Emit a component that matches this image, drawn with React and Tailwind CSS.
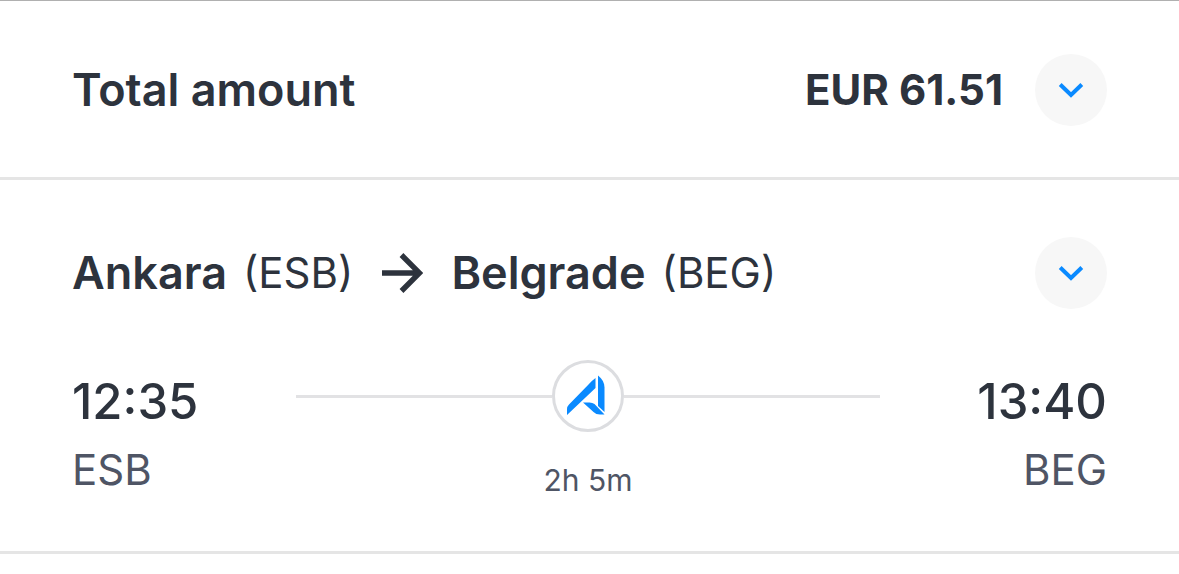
const trip = {
  total: "EUR 61.51",
  duration: "2h 5m",
  from: { city: "Ankara", code: "ESB", time: "12:35" },
  to: { city: "Belgrade", code: "BEG", time: "13:40" },
};

const ToggleButton = ({ label }) => (
  <button
    type="button"
    aria-label={label}
    className="grid size-[72px] shrink-0 cursor-pointer place-items-center rounded-full bg-[#f7f7f7]"
  >
    <svg width="26" height="16" viewBox="0 0 26 16" fill="none">
      <path d="M2.200 2.500 13 13 23.800 2.500" stroke="#0a8aff" strokeWidth="4" />
    </svg>
  </button>
);

const ArrowIcon = () => (
  <svg width="42" height="42" viewBox="0 0 42 42" fill="none" className="shrink-0">
    <path d="M1 21H38M20.500 3 38.500 21 20.500 39" stroke="#2d333d" strokeWidth="5.4" />
  </svg>
);

const CarrierLogo = () => (
  <div className="grid size-[72px] shrink-0 place-items-center rounded-full border-3 border-[#dcdde0] bg-white">
    <svg width="42" height="42" viewBox="0 0 42 42" fill="#0a8aff">
      <path d="M28.500 3v10L0 40v-6q0-2.500 2-4.500L21.500 9.500Q25 5.500 28.500 3Z" />
      <path d="M31 .5q6.500 5 6.500 12V37l-6.500-6Z" />
      <path d="M16 27.500h6.500q3 0 5 1.600L37.500 39.500H33q-4 0-6.500-2.500Z" />
    </svg>
  </div>
);

const Place = ({ city, code }) => (
  <div className="flex items-center gap-4">
    <span className="text-[45px] font-semibold">{city}</span>
    <span className="text-[42px]">({code})</span>
  </div>
);

export default function App() {
  return (
    <main className="border-t border-[#b0b0b0] bg-white font-['Inter',sans-serif] text-[#2d333d]">
      <section className="flex items-center justify-between border-b-3 border-[#e5e5e5] px-[72px] pt-[53px] pb-[51px]">
        <h2 className="text-[45px] leading-[52px] font-semibold">Total amount</h2>
        <div className="flex items-center gap-8">
          <span className="text-[42px] leading-[52px] font-bold">{trip.total}</span>
          <ToggleButton label="Show price details" />
        </div>
      </section>

      <section className="border-b-3 border-[#e5e5e5] px-[72px] pt-[57px] pb-[51px]">
        <div className="flex items-center justify-between">
          <h2 className="flex items-center gap-7 leading-[52px]">
            <Place {...trip.from} />
            <ArrowIcon />
            <Place {...trip.to} />
          </h2>
          <ToggleButton label="Show flight details" />
        </div>

        <div className="mt-[51px] flex items-start">
          <div className="w-[224px] pt-3">
            <div className="text-[49px] leading-[60px] font-medium">{trip.from.time}</div>
            <div className="pt-2 text-[42px] leading-[60px] text-[#4f5565]">{trip.from.code}</div>
          </div>

          <div className="flex flex-1 flex-col items-center">
            <div className="flex w-full items-center">
              <div className="h-[3px] flex-1 bg-[#e2e2e4]" />
              <CarrierLogo />
              <div className="h-[3px] flex-1 bg-[#e2e2e4]" />
            </div>
            <div className="pt-[30px] text-[30px] leading-[36px] text-[#4f5565]">{trip.duration}</div>
          </div>

          <div className="w-[227px] pt-3 text-right">
            <div className="text-[49px] leading-[60px] font-medium">{trip.to.time}</div>
            <div className="pt-2 text-[42px] leading-[60px] text-[#4f5565]">{trip.to.code}</div>
          </div>
        </div>
      </section>
    </main>
  );
}
